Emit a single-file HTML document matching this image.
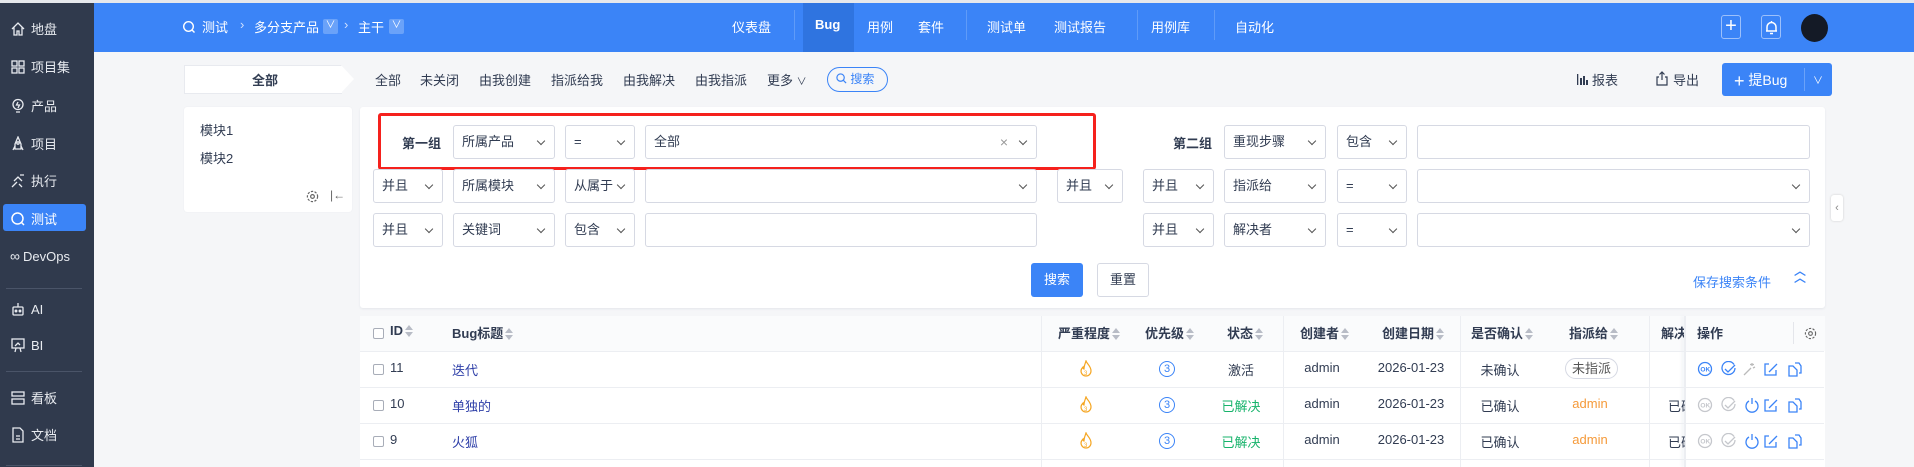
<!DOCTYPE html>
<html><head><meta charset="utf-8">
<style>
*{box-sizing:border-box;margin:0;padding:0}
body{width:1914px;height:467px;overflow:hidden;background:#f5f6f8;font-family:"Liberation Sans","Noto Sans CJK SC",sans-serif;font-size:13px;color:#313c52;position:relative}
.a{position:absolute;white-space:nowrap}
#top{position:absolute;left:0;top:0;width:1914px;height:3px;background:#e6e8ec}
#side{position:absolute;left:0;top:3px;width:94px;height:464px;background:#303a4d}
#bar{position:absolute;left:94px;top:3px;width:1820px;height:49px;background:#3b84f7}
.si{position:absolute;left:10px;color:#e8ebf0;font-size:13px;display:flex;align-items:center;gap:5px}
.sep{position:absolute;left:6px;width:76px;height:1px;background:#4a5468}
.nav{color:#fff;font-size:13px;top:17px}
.box{position:absolute;background:#fff;border:1px solid #d6d9e3;border-radius:3px;height:34px;font-size:13px;color:#313c52;padding-left:8px;line-height:32px}
.car::after{content:"";position:absolute;right:10px;top:12px;width:5px;height:5px;border-right:1px solid #555;border-bottom:1px solid #555;transform:rotate(45deg)}
.th{top:323px;font-size:13px;color:#313c52;font-weight:bold}
.sort{display:inline-block;width:8px;height:12px;position:relative;vertical-align:-2px;margin-left:2px}
.sort::before{content:"";position:absolute;left:0;top:0;border:4px solid transparent;border-bottom:5px solid #b8bcc6;border-top:0}
.sort::after{content:"";position:absolute;left:0;top:7px;border:4px solid transparent;border-top:5px solid #b8bcc6;border-bottom:0}
.hl{position:absolute;height:1px;background:#eceef2;left:360px;width:1464px}
.vl{position:absolute;width:1px;background:#eceef2;top:316px;height:151px}
.cb{position:absolute;width:11px;height:11px;border:1px solid #a8adb8;border-radius:2px;background:#fff}
.ct{text-align:center;transform:translateX(-50%)}
.link{color:#2e3fa8}
.green{color:#17b36b}
.org{color:#f59a3a}
</style></head><body>
<div id="top"></div>
<div id="side">
 <div class="si" style="top:16px"><svg width="16" height="16" viewBox="0 0 16 16" fill="none" stroke="#e8ebf0" stroke-width="1.3"><path d="M2 8L8 2l6 6M4 6.5V14h3v-4h2v4h3V6.5"/></svg>地盘</div>
 <div class="si" style="top:54px"><svg width="16" height="16" viewBox="0 0 16 16" fill="none" stroke="#e8ebf0" stroke-width="1.3"><rect x="2" y="2" width="5" height="5"/><rect x="9" y="2" width="5" height="5"/><rect x="2" y="9" width="5" height="5"/><rect x="9" y="9" width="5" height="5"/></svg>项目集</div>
 <div class="si" style="top:93px"><svg width="16" height="16" viewBox="0 0 16 16" fill="none" stroke="#e8ebf0" stroke-width="1.3"><circle cx="8" cy="6.5" r="5"/><path d="M6 14h4M8 4l-1.5 3h3L8 10"/></svg>产品</div>
 <div class="si" style="top:131px"><svg width="16" height="16" viewBox="0 0 16 16" fill="none" stroke="#e8ebf0" stroke-width="1.3"><path d="M8 1l3 7v5H5V8zM5 10l-2 4M11 10l2 4"/><circle cx="8" cy="7" r="1.2"/></svg>项目</div>
 <div class="si" style="top:168px"><svg width="16" height="16" viewBox="0 0 16 16" fill="none" stroke="#e8ebf0" stroke-width="1.3"><path d="M2 14l5-5M4 8l4-4 4 4M10 2l4 0M9 11l3 3"/></svg>执行</div>
 <div style="position:absolute;left:3px;top:201px;width:83px;height:27px;background:#3b84f7;border-radius:3px"></div>
 <div class="si" style="top:206px;color:#fff"><svg width="16" height="16" viewBox="0 0 16 16" fill="none" stroke="#fff" stroke-width="1.5"><circle cx="7.5" cy="7.5" r="5.5"/><path d="M11.5 11.5l2.5 2.5"/></svg>测试</div>
 <div class="si" style="top:245px"><span style="font-size:14px;letter-spacing:-2px">∞</span> DevOps</div>
 <div class="sep" style="top:285px"></div>
 <div class="si" style="top:298px"><svg width="16" height="16" viewBox="0 0 16 16" fill="none" stroke="#e8ebf0" stroke-width="1.3"><rect x="3" y="6" width="10" height="8" rx="1"/><path d="M8 2v4"/><circle cx="6" cy="10" r=".8"/><circle cx="10" cy="10" r=".8"/></svg>AI</div>
 <div class="si" style="top:334px"><svg width="16" height="16" viewBox="0 0 16 16" fill="none" stroke="#e8ebf0" stroke-width="1.3"><rect x="2" y="2" width="12" height="9"/><path d="M5 9l3-3 2 2M6 11l-1 4M10 11l1 4"/></svg>BI</div>
 <div class="sep" style="top:368px"></div>
 <div class="si" style="top:385px"><svg width="16" height="16" viewBox="0 0 16 16" fill="none" stroke="#e8ebf0" stroke-width="1.3"><rect x="2" y="2" width="12" height="4"/><rect x="2" y="9" width="12" height="5"/></svg>看板</div>
 <div class="si" style="top:422px"><svg width="16" height="16" viewBox="0 0 16 16" fill="none" stroke="#e8ebf0" stroke-width="1.3"><path d="M3 1h7l3 3v11H3zM6 9h4M6 12h4"/></svg>文档</div>
 <div class="sep" style="top:462px"></div>
</div>
<div id="bar"></div>
<svg class="a" style="left:182px;top:20px" width="14" height="14" viewBox="0 0 14 14" fill="none" stroke="#fff" stroke-width="1.4"><circle cx="6.5" cy="6.5" r="4.8"/><path d="M10 10l2.5 2.5"/></svg>
<div class="a nav" style="left:202px">测试</div>
<div class="a nav" style="left:240px;color:#cfe0ff">›</div>
<div class="a nav" style="left:254px">多分支产品</div>
<div class="a" style="left:323px;top:19px;width:15px;height:15px;background:#6aa2f9;color:#fff;font-size:10px;text-align:center;line-height:14px;border-radius:2px">∨</div>
<div class="a nav" style="left:344px;color:#cfe0ff">›</div>
<div class="a nav" style="left:358px">主干</div>
<div class="a" style="left:389px;top:19px;width:15px;height:15px;background:#6aa2f9;color:#fff;font-size:10px;text-align:center;line-height:14px;border-radius:2px">∨</div>
<div class="a nav" style="left:732px">仪表盘</div>
<div class="a" style="left:794px;top:10px;width:1px;height:30px;background:#5f9bf8"></div>
<div class="a" style="left:803px;top:3px;width:51px;height:49px;background:#2f74e0"></div>
<div class="a nav" style="left:815px;font-weight:bold">Bug</div>
<div class="a nav" style="left:867px">用例</div>
<div class="a nav" style="left:918px">套件</div>
<div class="a" style="left:966px;top:10px;width:1px;height:30px;background:#5f9bf8"></div>
<div class="a nav" style="left:987px">测试单</div>
<div class="a nav" style="left:1054px">测试报告</div>
<div class="a" style="left:1137px;top:10px;width:1px;height:30px;background:#5f9bf8"></div>
<div class="a nav" style="left:1151px">用例库</div>
<div class="a" style="left:1214px;top:10px;width:1px;height:30px;background:#5f9bf8"></div>
<div class="a nav" style="left:1235px">自动化</div>
<div class="a" style="left:1721px;top:15px;width:20px;height:24px;border:1px solid #9cc0fb;border-radius:3px;color:#fff;font-size:20px;text-align:center;line-height:21px">+</div>
<div class="a" style="left:1761px;top:15px;width:20px;height:24px;border:1px solid #9cc0fb;border-radius:3px"><svg style="position:absolute;left:3px;top:4px" width="13" height="15" viewBox="0 0 13 15" fill="none" stroke="#fff" stroke-width="1.5"><path d="M2 11V7a4.5 4.5 0 019 0v4zM1 11h11M5 13.5h3M6.5 1v1"/></svg></div>
<div class="a" style="left:1801px;top:14px;width:27px;height:28px;border-radius:50%;background:#141a26"></div>

<div class="a" style="left:184px;top:65px;width:158px;height:29px;background:#fff;border:1px solid #e8eaef;border-right:0"></div>
<div class="a" style="left:341px;top:65px;width:0;height:0;border-top:14.5px solid transparent;border-bottom:14.5px solid transparent;border-left:13px solid #fff"></div>
<div class="a" style="left:252px;top:70px;font-weight:bold">全部</div>
<div class="a" style="left:375px;top:70px">全部</div>
<div class="a" style="left:420px;top:70px">未关闭</div>
<div class="a" style="left:479px;top:70px">由我创建</div>
<div class="a" style="left:551px;top:70px">指派给我</div>
<div class="a" style="left:623px;top:70px">由我解决</div>
<div class="a" style="left:695px;top:70px">由我指派</div>
<div class="a" style="left:767px;top:70px">更多 <span style="font-size:10px">∨</span></div>
<div class="a" style="left:827px;top:67px;width:61px;height:25px;border:1px solid #3b84f7;border-radius:13px;color:#3b84f7;font-size:12px;line-height:23px;padding-left:8px">
<svg width="11" height="11" viewBox="0 0 12 12" fill="none" stroke="#3b84f7" stroke-width="1.3" style="vertical-align:-1px"><circle cx="5" cy="5" r="4"/><path d="M8 8l3 3"/></svg> 搜索</div>
<svg class="a" style="left:1577px;top:73px" width="12" height="12" viewBox="0 0 12 12" fill="#313c52"><rect x="0" y="1" width="1.3" height="11"/><rect x="3" y="5" width="2" height="7"/><rect x="6" y="3" width="2" height="9"/><rect x="9" y="7" width="2" height="5"/></svg>
<div class="a" style="left:1592px;top:70px">报表</div>
<svg class="a" style="left:1655px;top:71px" width="14" height="15" viewBox="0 0 14 15" fill="none" stroke="#313c52" stroke-width="1.2"><path d="M4 6H2v8h10V6h-2M7 1v8M4.5 3.5L7 1l2.5 2.5"/></svg>
<div class="a" style="left:1673px;top:70px">导出</div>
<div class="a" style="left:1722px;top:63px;width:110px;height:33px;background:#3b84f7;border-radius:3px"></div>
<div class="a" style="left:1804px;top:68px;width:1px;height:23px;background:#6aa2f9"></div>
<div class="a" style="left:1734px;top:70px;color:#fff;font-size:14px"><span style="font-size:18px;vertical-align:-2px">+</span> 提Bug</div>
<div class="a" style="left:1813px;top:72px;color:#fff;font-size:10px">∨</div>

<div class="a" style="left:184px;top:107px;width:168px;height:105px;background:#fff;border-radius:3px;box-shadow:0 0 1px #dfe2e8"></div>
<div class="a" style="left:200px;top:120px">模块1</div>
<div class="a" style="left:200px;top:148px">模块2</div>
<svg class="a" style="left:306px;top:190px" width="13" height="13" viewBox="0 0 14 14" fill="none" stroke="#666" stroke-width="1.3"><circle cx="7" cy="7" r="2"/><circle cx="7" cy="7" r="5.5" stroke-dasharray="2.5 1.5"/></svg>
<div class="a" style="left:330px;top:188px;color:#666;font-size:12px">|←</div>

<div class="a" style="left:360px;top:107px;width:1465px;height:201px;background:#fff;border-radius:3px;box-shadow:0 1px 2px #e4e6eb"></div>
<div class="a" style="left:402px;top:133px;font-weight:bold">第一组</div>
<div class="box car" style="left:453px;top:125px;width:102px">所属产品</div>
<div class="box car" style="left:565px;top:125px;width:70px">=</div>
<div class="box car" style="left:645px;top:125px;width:392px">全部<span style="position:absolute;right:28px;color:#999;font-size:14px">×</span></div>
<div class="a" style="left:378px;top:113px;width:718px;height:57px;border:3px solid #f5211d;border-radius:3px"></div>
<div class="a" style="left:1173px;top:133px;font-weight:bold">第二组</div>
<div class="box car" style="left:1224px;top:125px;width:102px">重现步骤</div>
<div class="box car" style="left:1337px;top:125px;width:70px">包含</div>
<div class="box" style="left:1417px;top:125px;width:393px"></div>

<div class="box car" style="left:373px;top:169px;width:70px">并且</div>
<div class="box car" style="left:453px;top:169px;width:102px">所属模块</div>
<div class="box car" style="left:565px;top:169px;width:70px">从属于</div>
<div class="box car" style="left:645px;top:169px;width:392px"></div>
<div class="box car" style="left:1057px;top:169px;width:66px">并且</div>
<div class="box car" style="left:1143px;top:169px;width:71px">并且</div>
<div class="box car" style="left:1224px;top:169px;width:102px">指派给</div>
<div class="box car" style="left:1337px;top:169px;width:70px">=</div>
<div class="box car" style="left:1417px;top:169px;width:393px"></div>

<div class="box car" style="left:373px;top:213px;width:70px">并且</div>
<div class="box car" style="left:453px;top:213px;width:102px">关键词</div>
<div class="box car" style="left:565px;top:213px;width:70px">包含</div>
<div class="box" style="left:645px;top:213px;width:392px"></div>
<div class="box car" style="left:1143px;top:213px;width:71px">并且</div>
<div class="box car" style="left:1224px;top:213px;width:102px">解决者</div>
<div class="box car" style="left:1337px;top:213px;width:70px">=</div>
<div class="box car" style="left:1417px;top:213px;width:393px"></div>

<div class="a" style="left:1031px;top:263px;width:52px;height:34px;background:#3b84f7;border-radius:3px;color:#fff;text-align:center;line-height:34px">搜索</div>
<div class="a" style="left:1097px;top:263px;width:52px;height:34px;border:1px solid #d6d9e3;border-radius:3px;background:#fff;text-align:center;line-height:32px">重置</div>
<div class="a" style="left:1693px;top:272px;color:#3b84f7">保存搜索条件</div>
<div class="a" style="left:1794px;top:268px;color:#3b84f7;font-size:12px;line-height:7px;font-weight:bold">︿<br>︿</div>
<div class="a" style="left:1831px;top:195px;width:12px;height:26px;background:#fff;border-radius:3px;box-shadow:0 0 2px #ccc;color:#888;font-size:11px;text-align:center;line-height:26px">‹</div>

<div class="a" style="left:360px;top:316px;width:1465px;height:151px;background:#fff"></div>
<div class="a" style="left:360px;top:316px;width:1465px;height:35px;background:#fafbfc"></div>
<div class="hl" style="top:351px"></div>
<div class="hl" style="top:387px"></div>
<div class="hl" style="top:423px"></div>
<div class="hl" style="top:459px"></div>
<div class="vl" style="left:1041px"></div>
<div class="vl" style="left:1283px"></div>
<div class="vl" style="left:1460px"></div>
<div class="vl" style="left:1649px"></div>
<div class="a" style="left:1684px;top:316px;width:2px;height:151px;background:#eceef2;box-shadow:-2px 0 3px #eceef2"></div>
<div class="a" style="left:1793px;top:322px;width:1px;height:22px;background:#e4e6eb"></div>

<div class="cb" style="left:373px;top:328px"></div>
<div class="a th" style="left:390px">ID<span class="sort"></span></div>
<div class="a th" style="left:452px">Bug标题<span class="sort"></span></div>
<div class="a th" style="left:1058px">严重程度<span class="sort"></span></div>
<div class="a th" style="left:1145px">优先级<span class="sort"></span></div>
<div class="a th" style="left:1227px">状态<span class="sort"></span></div>
<div class="a th" style="left:1300px">创建者<span class="sort"></span></div>
<div class="a th" style="left:1382px">创建日期<span class="sort"></span></div>
<div class="a th" style="left:1471px">是否确认<span class="sort"></span></div>
<div class="a th" style="left:1569px">指派给<span class="sort"></span></div>
<div class="a th" style="left:1661px;width:23px;overflow:hidden">解决</div>
<div class="a th" style="left:1697px">操作</div>
<svg class="a" style="left:1804px;top:327px" width="13" height="13" viewBox="0 0 14 14" fill="none" stroke="#666" stroke-width="1.2"><circle cx="7" cy="7" r="2"/><circle cx="7" cy="7" r="5.5" stroke-dasharray="2.5 1.5"/></svg>

<div class="cb" style="left:373px;top:364px"></div><div class="a" style="left:390px;top:360px">11</div><div class="a link" style="left:452px;top:360px">迭代</div>
<div class="cb" style="left:373px;top:400px"></div><div class="a" style="left:390px;top:396px">10</div><div class="a link" style="left:452px;top:396px">单独的</div>
<div class="cb" style="left:373px;top:436px"></div><div class="a" style="left:390px;top:432px">9</div><div class="a link" style="left:452px;top:432px">火狐</div>

<svg class="a" style="left:1079px;top:360px" width="14" height="18" viewBox="0 0 14 18" fill="none" stroke="#f5a623" stroke-width="1.2"><path d="M7 1c1 3 5 5 5 10a5 5 0 01-10 0c0-2 1-3 2-4 0 2 1 2 1 2 0-3 1-5 2-8z"/><text x="5" y="15" font-size="6" fill="#f5a623" stroke="none" font-family="Liberation Sans">3</text></svg>
<svg class="a" style="left:1079px;top:396px" width="14" height="18" viewBox="0 0 14 18" fill="none" stroke="#f5a623" stroke-width="1.2"><path d="M7 1c1 3 5 5 5 10a5 5 0 01-10 0c0-2 1-3 2-4 0 2 1 2 1 2 0-3 1-5 2-8z"/><text x="5" y="15" font-size="6" fill="#f5a623" stroke="none" font-family="Liberation Sans">3</text></svg>
<svg class="a" style="left:1079px;top:432px" width="14" height="18" viewBox="0 0 14 18" fill="none" stroke="#f5a623" stroke-width="1.2"><path d="M7 1c1 3 5 5 5 10a5 5 0 01-10 0c0-2 1-3 2-4 0 2 1 2 1 2 0-3 1-5 2-8z"/><text x="5" y="15" font-size="6" fill="#f5a623" stroke="none" font-family="Liberation Sans">3</text></svg>
<div class="a" style="left:1159px;top:361px;width:16px;height:16px;border:1px solid #3b84f7;border-radius:50%;color:#3b84f7;font-size:11px;text-align:center;line-height:14px">3</div>
<div class="a" style="left:1159px;top:397px;width:16px;height:16px;border:1px solid #3b84f7;border-radius:50%;color:#3b84f7;font-size:11px;text-align:center;line-height:14px">3</div>
<div class="a" style="left:1159px;top:433px;width:16px;height:16px;border:1px solid #3b84f7;border-radius:50%;color:#3b84f7;font-size:11px;text-align:center;line-height:14px">3</div>

<div class="a ct" style="left:1241px;top:360px">激活</div>
<div class="a ct green" style="left:1241px;top:396px">已解决</div>
<div class="a ct green" style="left:1241px;top:432px">已解决</div>
<div class="a ct" style="left:1322px;top:360px">admin</div>
<div class="a ct" style="left:1322px;top:396px">admin</div>
<div class="a ct" style="left:1322px;top:432px">admin</div>
<div class="a ct" style="left:1411px;top:360px">2026-01-23</div>
<div class="a ct" style="left:1411px;top:396px">2026-01-23</div>
<div class="a ct" style="left:1411px;top:432px">2026-01-23</div>
<div class="a ct" style="left:1500px;top:360px">未确认</div>
<div class="a ct" style="left:1500px;top:396px">已确认</div>
<div class="a ct" style="left:1500px;top:432px">已确认</div>
<div class="a" style="left:1565px;top:358px;width:53px;height:21px;border:1px solid #d6d9e3;border-radius:11px;text-align:center;line-height:19px;color:#555">未指派</div>
<div class="a ct org" style="left:1590px;top:396px">admin</div>
<div class="a ct org" style="left:1590px;top:432px">admin</div>
<div class="a" style="left:1668px;top:396px;width:17px;overflow:hidden">已确</div>
<div class="a" style="left:1668px;top:432px;width:17px;overflow:hidden">已确</div>

<div class="a" style="left:1686px;top:352px;width:138px;height:107px;background:#fff"></div>
<div class="a" style="left:1686px;top:387px;width:138px;height:1px;background:#eceef2"></div>
<div class="a" style="left:1686px;top:423px;width:138px;height:1px;background:#eceef2"></div>
<svg class="a" style="left:1697px;top:361px" width="120" height="16" viewBox="0 0 120 16" fill="none" stroke-width="1.3">
 <circle cx="8" cy="8" r="6.5" stroke="#3b84f7"/><text x="3.4" y="10.5" font-size="6.5" fill="#3b84f7" font-family="Liberation Sans" font-weight="bold">OK</text>
 <g stroke="#3b84f7"><path d="M37 3.5A6.5 6.5 0 1 0 38 7"/><path d="M28 8l3 3 7-7"/></g>
 <g stroke="#bbb"><path d="M47 14l7-7M55 2v3M53 3.5h4M58 6l-2 1"/></g>
 <g stroke="#3b84f7"><path d="M72 3h-4v11h11v-5M72 11l8-8"/></g>
 <g stroke="#3b84f7"><path d="M96 5h-4v10h8v-6zM98 2h4l2 3v7h-2"/></g>
</svg>
<svg class="a" style="left:1697px;top:397px" width="120" height="16" viewBox="0 0 120 16" fill="none" stroke-width="1.3">
 <circle cx="8" cy="8" r="6.5" stroke="#c5c7cc"/><text x="3.4" y="10.5" font-size="6.5" fill="#c5c7cc" font-family="Liberation Sans" font-weight="bold">OK</text>
 <g stroke="#c5c7cc"><path d="M37 3.5A6.5 6.5 0 1 0 38 7"/><path d="M28 8l3 3 7-7"/></g>
 <g stroke="#3b84f7"><path d="M52 4a6 6 0 1 0 6 0M55 1v6"/></g>
 <g stroke="#3b84f7"><path d="M72 3h-4v11h11v-5M72 11l8-8"/></g>
 <g stroke="#3b84f7"><path d="M96 5h-4v10h8v-6zM98 2h4l2 3v7h-2"/></g>
</svg>
<svg class="a" style="left:1697px;top:433px" width="120" height="16" viewBox="0 0 120 16" fill="none" stroke-width="1.3">
 <circle cx="8" cy="8" r="6.5" stroke="#c5c7cc"/><text x="3.4" y="10.5" font-size="6.5" fill="#c5c7cc" font-family="Liberation Sans" font-weight="bold">OK</text>
 <g stroke="#c5c7cc"><path d="M37 3.5A6.5 6.5 0 1 0 38 7"/><path d="M28 8l3 3 7-7"/></g>
 <g stroke="#3b84f7"><path d="M52 4a6 6 0 1 0 6 0M55 1v6"/></g>
 <g stroke="#3b84f7"><path d="M72 3h-4v11h11v-5M72 11l8-8"/></g>
 <g stroke="#3b84f7"><path d="M96 5h-4v10h8v-6zM98 2h4l2 3v7h-2"/></g>
</svg>
</body></html>
